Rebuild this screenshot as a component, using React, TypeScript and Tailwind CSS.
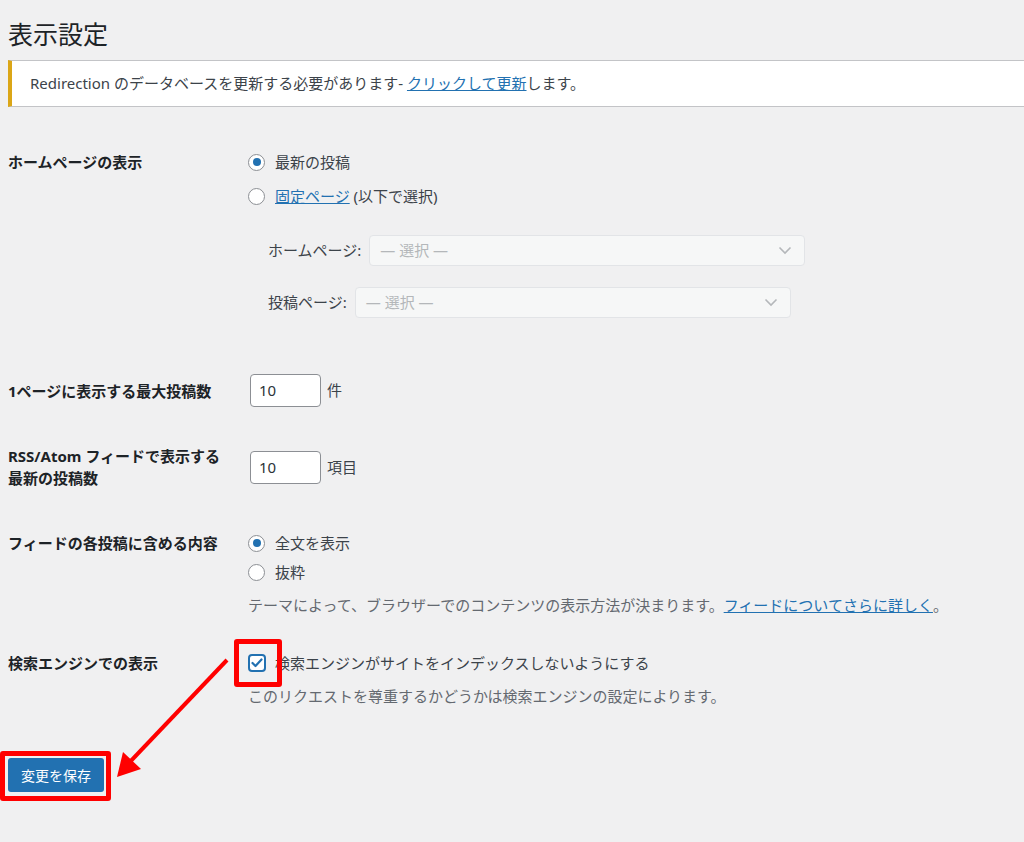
import React from 'react';

const font = { fontFamily: '"Noto Sans", "Noto Sans CJK JP", sans-serif' };

const Radio: React.FC<{ checked?: boolean }> = ({ checked }) => (
  <span className="w-[17px] h-[17px] rounded-full border border-[#8c8f94] bg-white flex items-center justify-center shrink-0">
    {checked && <span className="w-[8px] h-[8px] rounded-full bg-[#2271b1]" />}
  </span>
);

const Select: React.FC = () => (
  <div className="w-[436px] h-[31px] rounded-[4px] border border-[#e2e4e7] bg-[#f6f7f7] flex items-center justify-between pl-[10px] pr-[12px] text-[#b4b7ba]">
    <span>— 選択 —</span>
    <svg width="14" height="9" viewBox="0 0 14 9" fill="none" stroke="#b4b7ba" strokeWidth="1.6">
      <path d="M1.5 1.5 L7 7 L12.5 1.5" />
    </svg>
  </div>
);

const NumInput: React.FC = () => (
  <div className="w-[71px] h-[33px] rounded-[4px] border border-[#8c8f94] bg-white flex items-center pl-[8px] text-[#2c3338]">10</div>
);

const Label: React.FC<{ children: React.ReactNode }> = ({ children }) => (
  <div className="w-[240px] shrink-0 font-bold text-[#1d2327] leading-[22px]">{children}</div>
);

export default function App() {
  return (
    <div className="relative min-h-[842px] bg-[#f0f0f1] text-[15px] text-[#3c434a] overflow-hidden" style={font}>
      <div className="pl-[8px] pt-[16px]">
        <h1 className="text-[25px] leading-[36px] text-[#1d2327] font-normal">表示設定</h1>
      </div>

      <div className="ml-[8px] mt-[8px] h-[47px] bg-white border-y border-[#c3c4c7] border-l-4 border-l-[#dba617] flex items-center pl-[18px]">
        Redirection のデータベースを更新する必要があります-&nbsp;
        <span className="text-[#2271b1] underline">クリックして更新</span>します。
      </div>

      <div className="pl-[8px]">
        {/* front page */}
        <div className="flex mt-[44px]">
          <Label>ホームページの表示</Label>
          <div className="flex flex-col">
            <div className="flex items-center gap-[10px] h-[22px]">
              <Radio checked />
              <span className="text-[#3c434a]">最新の投稿</span>
            </div>
            <div className="flex items-center gap-[10px] h-[22px] mt-[12px]">
              <Radio />
              <span>
                <span className="text-[#2271b1] underline">固定ページ</span> (以下で選択)
              </span>
            </div>
            <div className="flex items-center ml-[20px] mt-[28px]">
              <span className="mr-[8px]">ホームページ:</span>
              <Select />
            </div>
            <div className="flex items-center ml-[20px] mt-[21px]">
              <span className="mr-[8px]">投稿ページ:</span>
              <Select />
            </div>
          </div>
        </div>

        {/* posts per page */}
        <div className="flex items-center mt-[56px]">
          <Label>1ページに表示する最大投稿数</Label>
          <div className="flex items-center gap-[6px] ml-[2px]">
            <NumInput />
            <span>件</span>
          </div>
        </div>

        {/* rss */}
        <div className="flex items-start mt-[38px]">
          <Label>
            RSS/Atom フィードで表示する
            <br />
            最新の投稿数
          </Label>
          <div className="flex items-center gap-[6px] mt-[6px] ml-[2px]">
            <NumInput />
            <span>項目</span>
          </div>
        </div>

        {/* feed content */}
        <div className="flex mt-[43px]">
          <Label>フィードの各投稿に含める内容</Label>
          <div className="flex flex-col">
            <div className="flex items-center gap-[10px] h-[22px]">
              <Radio checked />
              <span>全文を表示</span>
            </div>
            <div className="flex items-center gap-[10px] h-[22px] mt-[7px]">
              <Radio />
              <span>抜粋</span>
            </div>
            <p className="mt-[11px] text-[#646970] leading-[22px]">
              テーマによって、ブラウザーでのコンテンツの表示方法が決まります。
              <span className="text-[#2271b1] underline">フィードについてさらに詳しく</span>。
            </p>
          </div>
        </div>

        {/* search engine */}
        <div className="flex mt-[36px]">
          <Label>検索エンジンでの表示</Label>
          <div className="flex flex-col">
            <div className="flex items-center gap-[9px] h-[22px]">
              <span className="relative w-[18px] h-[18px] rounded-[4px] border-2 border-[#2271b1] bg-white flex items-center justify-center shrink-0">
                <svg width="12" height="10" viewBox="0 0 12 10" fill="none" stroke="#2271b1" strokeWidth="2.2" strokeLinecap="round" strokeLinejoin="round">
                  <path d="M1.5 5 L4.5 8 L10.5 1.5" />
                </svg>
                <span className="absolute left-[-16px] top-[-17px] w-[48px] h-[48px] border-[5px] border-[#ff0000] rounded-[3px]" />
              </span>
              <span>検索エンジンがサイトをインデックスしないようにする</span>
            </div>
            <p className="mt-[11px] text-[#646970] leading-[22px]">このリクエストを尊重するかどうかは検索エンジンの設定によります。</p>
          </div>
        </div>

        {/* submit */}
        <div className="mt-[51px]">
          <span className="relative inline-flex">
            <button className="w-[96px] h-[34px] rounded-[3px] bg-[#2271b1] text-white text-[14px] flex items-center justify-center">
              変更を保存
            </button>
            <span className="absolute left-[-8px] top-[-7px] w-[111px] h-[50px] border-[5px] border-[#ff0000] rounded-[3px]" />
          </span>
        </div>
      </div>

      {/* annotation arrow */}
      <svg className="absolute left-0 top-0 pointer-events-none" width="1024" height="842">
        <line x1="227" y1="660" x2="128" y2="764" stroke="#ff0000" strokeWidth="4" />
        <polygon points="117,777 123,752 141,769" fill="#ff0000" />
      </svg>
    </div>
  );
}
